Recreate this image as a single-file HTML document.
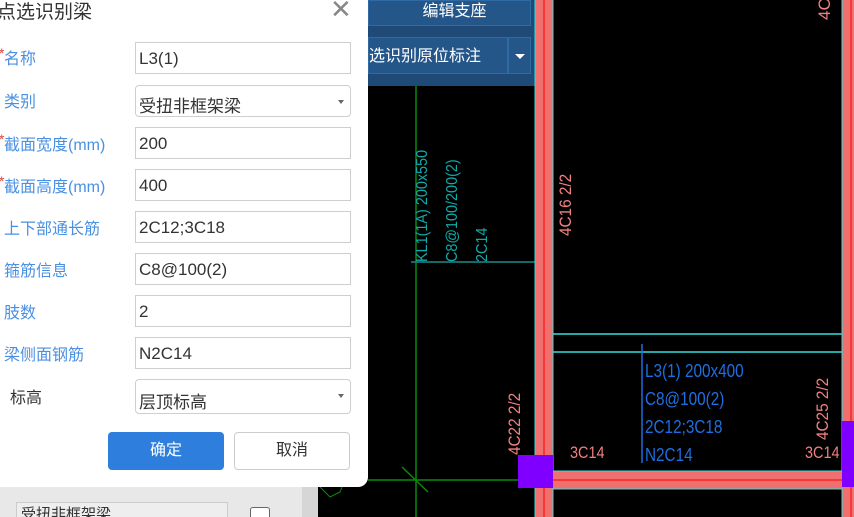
<!DOCTYPE html>
<html><head><meta charset="utf-8"><style>
*{margin:0;padding:0;box-sizing:border-box}
html,body{width:854px;height:517px;overflow:hidden}
body{background:#000;position:relative;font-family:"Liberation Sans","Noto Sans CJK SC",sans-serif}
.a{position:absolute}
.lbl{position:absolute;left:4px;font-size:16px;color:#4a90e2;margin-top:-2px}
.lbl i{color:#e04040;font-style:normal;font-size:14px;position:absolute;left:-5px;top:0}
.inp{position:absolute;left:135px;width:216px;height:32px;border:1px solid #cfcfcf;background:#fff;font-size:17px;color:#333;padding:6px 0 0 3px}
.sel{border-radius:4px}
.sel:after{content:"";position:absolute;right:6px;top:14px;border:3px solid transparent;border-top:4px solid #666}
.cad{position:absolute;font-family:"Liberation Sans Narrow","Liberation Sans",sans-serif;font-size:15px;white-space:nowrap;transform-origin:0 0}
</style></head><body>
<div class="a" style="left:0;top:470px;width:318px;height:47px;background:#e8e8e8"></div>
<div class="a" style="left:16px;top:502px;width:212px;height:20px;border:1px solid #ccc;background:#eee;font-size:15px;color:#333;padding-left:4px">受扭非框架梁</div>
<div class="a" style="left:250px;top:507px;width:20px;height:10px;border:1px solid #666;border-bottom:none;border-radius:3px 3px 0 0;background:#fff"></div>
<div class="a" style="left:302px;top:470px;width:16px;height:47px;background:#d6d6d6"></div>

<div class="a" style="left:368px;top:0;width:173px;height:86px;background:#1f4a78;border-right:2px solid #2d5f95"></div>
<div class="a" style="left:368px;top:0;width:163px;height:26px;background:#245689;border:1px solid #2f6aa3;color:#fff;font-size:16px;text-align:center;line-height:22px;padding-left:10px">编辑支座</div>
<div class="a" style="left:368px;top:37px;width:140px;height:37px;background:#245689;border:1px solid #2f6aa3;color:#fff;font-size:16px;line-height:37px">选识别原位标注</div>
<div class="a" style="left:508px;top:37px;width:23px;height:37px;background:#245689;border:1px solid #2f6aa3"></div>
<div class="a" style="left:515px;top:54px;border:5px solid transparent;border-top:5px solid #fff"></div>

<svg class="a" style="left:0;top:0" width="854" height="517">
<line x1="416" y1="86" x2="416" y2="517" stroke="#0a8a0a" stroke-width="1.5"/>
<line x1="368" y1="480" x2="535" y2="480" stroke="#0a8a0a" stroke-width="1.5"/>
<line x1="402" y1="467" x2="428" y2="492" stroke="#0a8a0a" stroke-width="1.5"/>
<polyline points="320,487 330,497 340,492 342,487" fill="none" stroke="#0a8a0a"/>
<line x1="411" y1="262" x2="543" y2="262" stroke="#1a8a8a" stroke-width="1.5"/>
<rect x="535" y="0" width="18" height="517" fill="#f07070"/>
<line x1="535" y1="0" x2="535" y2="517" stroke="#3dd" />
<line x1="553" y1="0" x2="553" y2="517" stroke="#3dd" />
<line x1="544" y1="0" x2="544" y2="517" stroke="#f00" />
<rect x="842" y="0" width="12" height="517" fill="#f07070"/>
<line x1="842" y1="0" x2="842" y2="517" stroke="#3dd"/>
<line x1="851" y1="0" x2="851" y2="517" stroke="#f00"/>
<rect x="553" y="471" width="289" height="18" fill="#f07070"/>
<line x1="553" y1="471" x2="842" y2="471" stroke="#3dd"/>
<line x1="553" y1="489" x2="842" y2="489" stroke="#3dd"/>
<line x1="535" y1="480" x2="854" y2="480" stroke="#f00"/>
<line x1="553" y1="334" x2="842" y2="334" stroke="#3dd" stroke-width="1.5"/>
<line x1="553" y1="352" x2="842" y2="352" stroke="#3dd" stroke-width="1.5"/>
<rect x="518" y="455" width="35" height="33" fill="#8000ff"/>
<rect x="842" y="421" width="12" height="66" fill="#8000ff"/>
<line x1="642" y1="344" x2="642" y2="463" stroke="#1e6ee0" stroke-width="1.5"/>
</svg>
<div class="cad" style="left:414px;top:262px;transform:rotate(-90deg) scaleX(0.9);color:#1aa;font-size:16px">KL1(1A) 200x550</div>
<div class="cad" style="left:444px;top:262px;transform:rotate(-90deg) scaleX(0.9);color:#1aa;font-size:16px">C8@100/200(2)</div>
<div class="cad" style="left:474px;top:262px;transform:rotate(-90deg) scaleX(0.9);color:#1aa;font-size:16px">2C14</div>
<div class="cad" style="left:556px;top:236px;transform:rotate(-90deg) scaleX(0.9);color:#f08080;font-size:17px">4C16 2/2</div>
<div class="cad" style="left:815px;top:20px;transform:rotate(-90deg);color:#f08080;font-size:17px">4C</div>
<div class="cad" style="left:505px;top:455px;transform:rotate(-90deg) scaleX(0.9);color:#f08080;font-size:17px">4C22 2/2</div>
<div class="cad" style="left:813px;top:440px;transform:rotate(-90deg) scaleX(0.9);color:#f08080;font-size:17px">4C25 2/2</div>
<div class="cad" style="left:570px;top:443px;color:#f08080;font-size:17px;transform:scaleX(0.85)">3C14</div>
<div class="cad" style="left:805px;top:443px;color:#f08080;font-size:17px;transform:scaleX(0.85)">3C14</div>
<div class="cad" style="left:645px;top:357px;color:#1e6ee0;line-height:28px;font-size:18px;transform:scaleX(0.85)">L3(1) 200x400<br>C8@100(2)<br>2C12;3C18<br>N2C14</div>

<div class="a" style="left:0;top:0;width:368px;height:487px;background:#fff;border-radius:0 0 10px 0"></div>
<div class="a" style="left:-3px;top:-3px;font-size:19px;color:#333">点选识别梁</div>
<div class="a" style="left:330px;top:-6px;font-size:26px;color:#888;font-weight:300">✕</div>

<div class="lbl" style="top:47px"><i>*</i>名称</div><div class="inp" style="top:42px">L3(1)</div>
<div class="lbl" style="top:90px">类别</div><div class="inp sel" style="top:85px">受扭非框架梁</div>
<div class="lbl" style="top:133px"><i>*</i>截面宽度(mm)</div><div class="inp" style="top:127px">200</div>
<div class="lbl" style="top:175px"><i>*</i>截面高度(mm)</div><div class="inp" style="top:169px">400</div>
<div class="lbl" style="top:217px">上下部通长筋</div><div class="inp" style="top:211px">2C12;3C18</div>
<div class="lbl" style="top:259px">箍筋信息</div><div class="inp" style="top:253px">C8@100(2)</div>
<div class="lbl" style="top:301px">肢数</div><div class="inp" style="top:295px">2</div>
<div class="lbl" style="top:343px">梁侧面钢筋</div><div class="inp" style="top:337px">N2C14</div>
<div class="lbl" style="top:386px;left:10px;color:#333">标高</div><div class="inp sel" style="top:379px;height:35px;padding-top:8px">层顶标高</div>

<div class="a" style="left:108px;top:432px;width:116px;height:38px;background:#2e7fdd;border-radius:4px;color:#fff;font-size:16px;text-align:center;line-height:38px">确定</div>
<div class="a" style="left:234px;top:432px;width:116px;height:38px;background:#fff;border:1px solid #ccc;border-radius:4px;color:#333;font-size:16px;text-align:center;line-height:36px">取消</div>
</body></html>
